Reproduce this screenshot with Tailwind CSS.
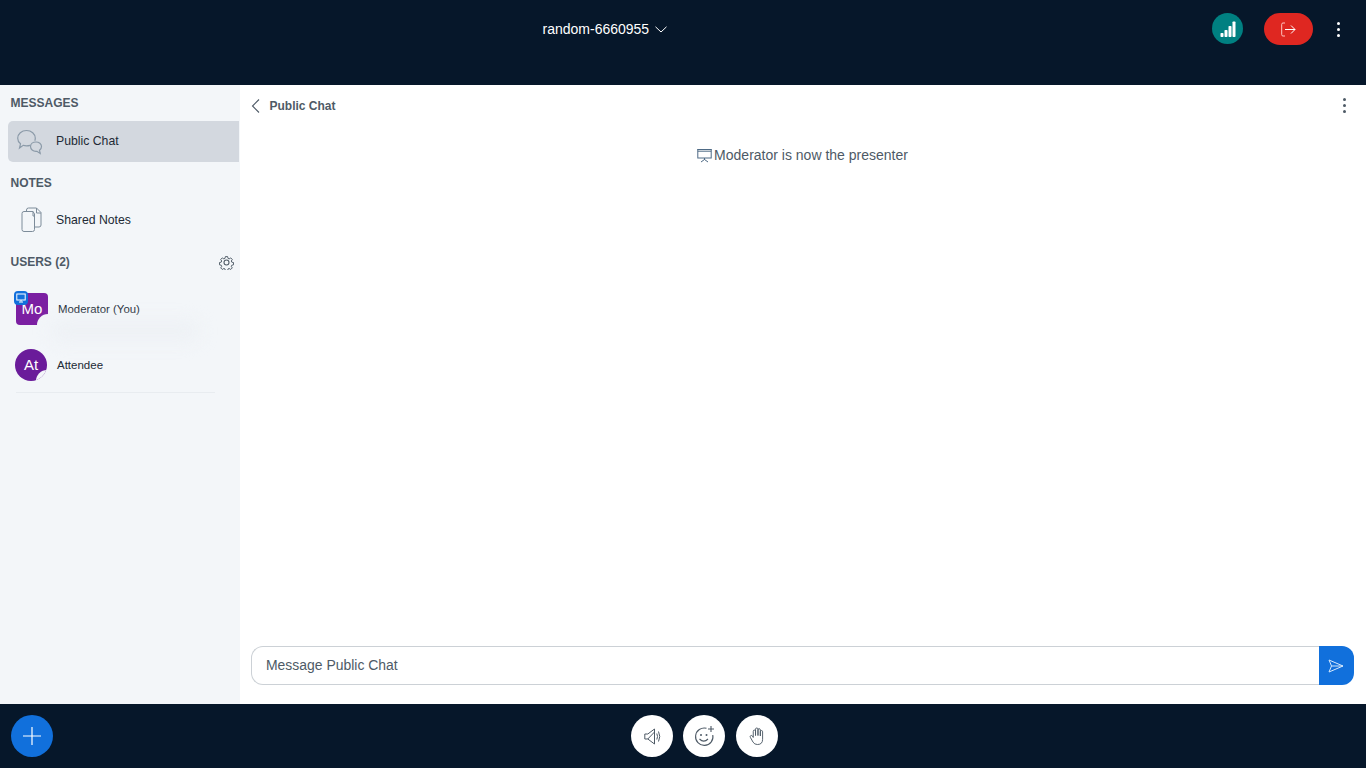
<!DOCTYPE html>
<html lang="en">
<head>
    <meta charset="UTF-8">
    <title>random-6660955</title>
    <script src="https://cdn.jsdelivr.net/npm/@tailwindcss/browser@4"></script>
</head>
<body class="h-[768px] w-[1366px] overflow-hidden bg-white font-['Liberation_Sans',sans-serif] flex flex-col">

    <!-- top bar -->
    <header class="h-[85px] bg-[#06172a] flex items-start shrink-0">
        <div class="w-[542.500px] shrink-0"></div>
        <div class="flex items-center h-[16px] mt-[21px] text-white text-[14px]">
            <span>random-6660955</span>
            <svg class="ml-[6px]" width="12" height="7" viewBox="0 0 12 7" fill="none" stroke="#fff" stroke-width="1"><path d="M.5.8 6 6l5.500-5.200"/></svg>
        </div>
        <div class="ml-auto flex items-start">
            <div class="w-[31px] h-[31px] mt-[13px] rounded-full bg-[#008081] flex items-center justify-center">
                <svg width="16" height="16" viewBox="0 0 16 16" fill="#fff"><rect x="0.500" y="12" width="3" height="4" rx=".8"/><rect x="4.500" y="9" width="3" height="7" rx=".8"/><rect x="8.500" y="5" width="3" height="11" rx=".8"/><rect x="12.500" y="0.500" width="3" height="15.500" rx=".8"/></svg>
            </div>
            <div class="w-[49px] h-[32px] mt-[13px] ml-[21px] rounded-full bg-[#df2721] flex items-center justify-center">
                <svg width="15" height="15" viewBox="0 0 15 15" fill="none" stroke="#fff" stroke-width="1"><path d="M4 1H2Q.7 1 .7 2.300v10.400Q.7 14 2 14h2" stroke="#ffc4c0"/><path d="M4 7.500h10M10 3.500l4 4-4 4"/></svg>
            </div>
            <div class="ml-[24px] mr-[26px] mt-[22px] flex flex-col gap-[3px]">
                <span class="w-[3px] h-[3px] rounded-full bg-white"></span>
                <span class="w-[3px] h-[3px] rounded-full bg-white"></span>
                <span class="w-[3px] h-[3px] rounded-full bg-white"></span>
            </div>
        </div>
    </header>

    <div class="flex-1 flex min-h-0">
        <!-- sidebar -->
        <aside class="relative w-[240px] shrink-0 bg-[#f3f6f9] pt-[11px]">
            <div class="pl-[10.500px] h-[14px] leading-[14px] text-[12px] font-bold text-[#4e5a66]">MESSAGES</div>
            <div class="ml-[8px] mr-[1px] mt-[11px] h-[41px] rounded-l-[5px] bg-[#d3d8df] flex items-center">
                <svg class="ml-[9px]" width="26" height="26" viewBox="0 0 26 26" fill="none" stroke="#8b9aa8" stroke-width="1.200">
                    <path d="M13 16.300q-1.700.5-3.500.5-1.800 0-3.300-.5L2.500 19l1-4.200C1.700 13.400.7 11.500.7 9.300.7 5 4.600 1.500 9.500 1.500s8.800 3.500 8.800 7.800q0 1.200-.5 2.400"/>
                    <path d="M19 13c3 0 5.500 2 5.500 4.600 0 1.500-.8 2.800-2 3.700l.7 3.200-3.300-2.200H19c-3 0-5.500-2-5.500-4.700S16 13 19 13z"/>
                </svg>
                <span class="ml-[13px] text-[12.250px] text-[#222a35]">Public Chat</span>
            </div>
            <div class="pl-[10.500px] mt-[14px] h-[14px] leading-[14px] text-[12px] font-bold text-[#4e5a66]">NOTES</div>
            <div class="ml-[8px] mt-[9px] h-[41px] flex items-center">
                <svg class="ml-[13px]" width="21" height="26" viewBox="0 0 21 26" fill="none" stroke="#7d8c9a" stroke-width="1">
                    <path d="M12 4.500H3Q1 4.500 1 6.500v16Q1 24.500 3 24.500h8.500q2 0 2-2V7z"/>
                    <path d="M5.500 4.500V3q0-2 2-2h8l4.500 4.500V18q0 2-2 2h-4.500"/>
                    <path d="M15.500 1v5h4.500M12 4.500V9h1.500"/>
                </svg>
                <span class="ml-[14px] pt-[1px] text-[12.250px] text-[#222a35]">Shared Notes</span>
            </div>
            <div class="pl-[10.500px] pr-[6px] mt-[14px] h-[16px] flex items-center justify-between">
                <span class="text-[12px] font-bold text-[#4e5a66]">USERS (2)</span>
                <svg width="15" height="15" viewBox="0 0 24 24" fill="none" stroke="#4e5a66" stroke-width="1.700"><circle cx="12" cy="12" r="4"/><path d="m10 1.500 h4l.7 3.200 2 .9 2.800-1.800 2.800 2.800-1.800 2.800.9 2 3.100.7v4l-3.100.7-.9 2 1.800 2.800-2.800 2.800-2.800-1.800-2 .9-.7 3.100h-4l-.7-3.100-2-.9-2.800 1.800-2.800-2.800 1.800-2.800-.9-2-3.100-.7v-4l3.100-.7.9-2-1.800-2.800 2.800-2.800 2.800 1.800 2-.9z" transform="translate(1.200 1.200) scale(.9)"/></svg>
            </div>

            <div class="mt-[23px] ml-[16px] flex items-center h-[32px]">
                <div class="relative w-[32px] h-[32px] rounded-[4px] bg-[#7b1fa2] text-white text-[15px] flex items-center justify-center">
                    Mo
                    <span class="absolute right-[-11px] bottom-[-11px] w-[22px] h-[22px] rounded-full bg-[#f3f6f9]"></span>
                    <span class="absolute left-[-2px] top-[-2px] w-[14px] h-[14px] rounded-[4px] bg-[#1170dc] flex items-center justify-center">
                        <svg width="10" height="10" viewBox="0 0 10 10" fill="none" stroke="#fff" stroke-width="1"><rect x=".8" y="1" width="8.400" height="6"/><path d="M5 7v1.500M3 9h4"/></svg>
                    </span>
                </div>
                <span class="ml-[10px] pt-[1px] text-[11.400px] text-[#222a35]">Moderator (You)</span>
            </div>
            <div class="mt-[24px] ml-[15px] flex items-center h-[32px]">
                <div class="relative w-[32px] h-[32px] rounded-full bg-[#6a1b9a] overflow-hidden text-white text-[15px] flex items-center justify-center">
                    At
                    <span class="absolute right-[-11px] bottom-[-11px] w-[22px] h-[22px] rounded-full bg-[#f3f6f9]"></span>
                </div>
                <span class="ml-[10px] pt-[1px] text-[11.500px] text-[#222a35]">Attendee</span>
            </div>
            <div class="ml-[16px] mr-[25px] mt-[11px] h-px bg-[#e8ecf0]"></div>
            <!-- faint smudge under the first user row -->
            <div class="absolute left-[50px] top-[235px] w-[150px] h-[22px] rounded-full bg-[#eef1f5] blur-sm"></div>
        </aside>

        <!-- chat -->
        <main class="flex-1 flex flex-col min-w-0">
            <div class="h-[41px] shrink-0 flex items-center pl-[11px] pr-[20px]">
                <svg width="9" height="14" viewBox="0 0 9 14" fill="none" stroke="#4e5a66" stroke-width="1.100"><path d="M8 .5 1.500 7 8 13.500"/></svg>
                <span class="ml-[9.500px] text-[12px] font-bold text-[#4e5a66]">Public Chat</span>
                <div class="ml-auto flex flex-col gap-[3px]">
                    <span class="w-[3px] h-[3px] rounded-full bg-[#4e5a66]"></span>
                    <span class="w-[3px] h-[3px] rounded-full bg-[#4e5a66]"></span>
                    <span class="w-[3px] h-[3px] rounded-full bg-[#4e5a66]"></span>
                </div>
            </div>
            <div class="flex-1 pt-[20px] flex justify-center">
                <div class="flex items-center h-[18px] text-[14px] text-[#4e5a66] ml-[-1px]">
                    <svg class="mr-[2px]" width="15" height="15" viewBox="0 0 15 15" fill="none" stroke="#4e6a85" stroke-width="1"><rect x=".8" y="1.500" width="13.400" height="8.500"/><path d="M.5 1.500h14M.8 3.200h13.400M7.500 10v2M7.500 11.500 4 14M7.500 11.500 11 14"/></svg>
                    <span>Moderator is now the presenter</span>
                </div>
            </div>
            <div class="h-[39px] mx-[11px] mb-[19px] mr-[12px] flex shrink-0">
                <div class="flex-1 border border-[#ccd1d6] border-r-0 rounded-l-[12px] bg-white flex items-center pl-[14px] text-[13.950px] text-[#4e5a66]">Message Public Chat</div>
                <div class="w-[35px] bg-[#1170dc] rounded-r-[12px] flex items-center justify-center">
                    <svg class="mr-[1px]" width="16" height="14" viewBox="0 0 16 14" fill="none" stroke="#d5e8fb" stroke-width="1"><path d="M1 1 15 7 1 13l2.500-6z"/><path d="M3.500 7H15"/></svg>
                </div>
            </div>
        </main>
    </div>

    <!-- action bar -->
    <footer class="h-[64px] bg-[#06172a] shrink-0 flex items-center relative">
        <div class="ml-[11px] w-[42px] h-[42px] rounded-full bg-[#1170dc] flex items-center justify-center">
            <svg width="18" height="18" viewBox="0 0 18 18" stroke="#fff" stroke-width="1.200"><path d="M9 0v18M0 9h18"/></svg>
        </div>
        <div class="ml-[578px] flex gap-[10px]">
            <div class="w-[42px] h-[42px] rounded-full bg-white flex items-center justify-center">
                <svg class="ml-[1px]" width="18" height="17" viewBox="0 0 18 17" fill="none" stroke="#4e5a66" stroke-width="1"><path d="M.8 6h3L10.500 1v15l-6.700-5h-3z"/><path d="M3.800 11 10.500 4"/><path d="M12.800 5.500q1.500 3 0 6M14.500 3.500q2.500 5 0 10"/></svg>
            </div>
            <div class="w-[42px] h-[42px] rounded-full bg-white flex items-center justify-center">
                <svg width="21" height="21" viewBox="0 0 21 21" fill="none" stroke="#4e5a66" stroke-width="1.100"><path d="M12.500 2.300A8.700 8.700 0 1 0 18.800 9"/><circle cx="7" cy="9" r="1" fill="#4e5a66" stroke="none"/><circle cx="12.500" cy="9" r="1" fill="#4e5a66" stroke="none"/><path d="M5.500 13q4.300 4.300 8.500 0M17 0v6M14 3h6" /></svg>
            </div>
            <div class="ml-[1px] w-[42px] h-[42px] rounded-full bg-white flex items-center justify-center">
                <svg width="17" height="19" viewBox="0 0 18 20" fill="none" stroke="#4e5a66" stroke-width="1"><path d="M4.500 11V4.500q0-1.300 1.200-1.300t1.200 1.300V9M6.900 9V2.300q0-1.300 1.300-1.300t1.300 1.300V9M9.500 9V3q0-1.300 1.200-1.300T12 3v6.500M12 9.500V5q0-1.300 1.200-1.300t1.200 1.300v8q0 5.500-5.500 5.500-3 0-4.600-2.500L1.500 11q-.7-1.300.3-1.900t1.900.4l.8 1.500"/></svg>
            </div>
        </div>
    </footer>
</body>
</html>
